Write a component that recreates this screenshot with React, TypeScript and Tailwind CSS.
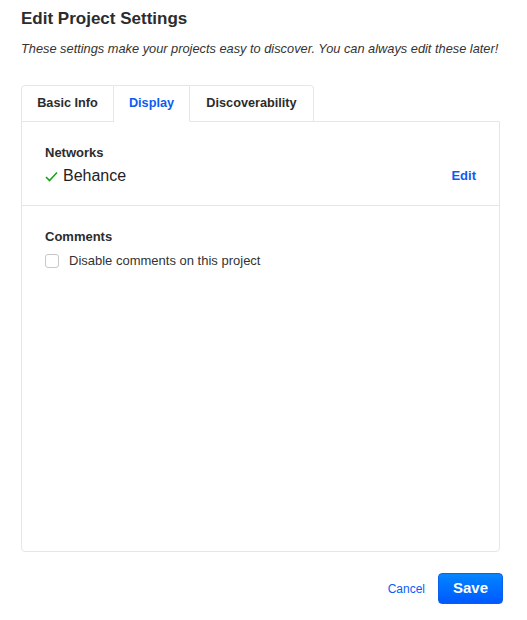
import React, { useState } from "react";

const tabs = [
  { name: "Basic Info", w: "w-[93px]" },
  { name: "Display", w: "w-[76px]" },
  { name: "Discoverability", w: "w-[124px]" },
];

export default function App() {
  const [active, setActive] = useState("Display");
  const [disabled, setDisabled] = useState(false);

  return (
    <div className="w-[527px] h-[620px] bg-white pl-[21px] font-['Liberation_Sans',Arial,sans-serif] text-[#222]">
      {/* Header */}
      <h1 className="pt-[9px] text-[17px] leading-[20px] font-bold text-[#2c2c2c]">Edit Project Settings</h1>
      <p className="mt-[12px] text-[12.8px] leading-[16px] italic text-[#333]">
        These settings make your projects easy to discover. You can always edit these later!
      </p>

      {/* Tabs */}
      <div className="mt-[28px] flex h-[37px]">
        {tabs.map((t, i) => (
          <button
            key={t.name}
            onClick={() => setActive(t.name)}
            className={
              t.w +
              " h-[37px] text-center text-[12.7px] font-bold border-t border-[#e6e6e6] " +
              (i === 0 ? "border-l rounded-tl-[4px] " : "") +
              (i === tabs.length - 1 ? "rounded-tr-[4px] " : "") +
              "border-r " +
              (active === t.name ? "text-[#0a5cf5] border-b border-b-white" : "text-[#2c2c2c] border-b")
            }
          >
            {t.name}
          </button>
        ))}
      </div>

      {/* Panel */}
      <div className="w-[479px] h-[431px] -mt-px border border-[#e6e6e6] rounded-b-[4px]">
        <div className="h-[84px] pl-[23px] pr-[23px] pt-[23px] border-b border-[#e6e6e6]">
          <div className="text-[13px] leading-[16px] font-bold text-[#2c2c2c]">Networks</div>
          <div className="mt-[5px] flex items-center justify-between">
            <div className="flex items-center gap-[5px]">
              <svg width="13" height="11" viewBox="0 0 13 11" fill="none">
                <path d="M1 6 L4.5 9.5 L12 1.5" stroke="#1aa31a" strokeWidth="1.6" />
              </svg>
              <span className="text-[16px] leading-[20px] text-[#222]">Behance</span>
            </div>
            <button className="text-[13px] font-bold text-[#0a5cf5]">Edit</button>
          </div>
        </div>
        <div className="px-[23px] pt-[23px]">
          <div className="text-[13px] leading-[16px] font-bold text-[#2c2c2c]">Comments</div>
          <label className="mt-[8px] flex items-center gap-[10px] cursor-pointer">
            <input
              type="checkbox"
              checked={disabled}
              onChange={() => setDisabled(!disabled)}
              className="w-[14px] h-[14px] appearance-none rounded-[3px] border border-[#c8c8c8] bg-white checked:bg-[#0a5cf5]"
            />
            <span className="text-[13px] leading-[16px] text-[#333]">Disable comments on this project</span>
          </label>
        </div>
      </div>

      {/* Footer */}
      <div className="w-[482px] mt-[21px] flex items-center justify-end gap-[13px]">
        <button className="text-[12px] text-[#0a5cf5]">Cancel</button>
        <button className="w-[65px] h-[31px] rounded-[4px] bg-gradient-to-b from-[#0a85ff] to-[#0057ff] border border-[#0a60e8] text-white text-[15px] font-bold">
          Save
        </button>
      </div>
    </div>
  );
}
